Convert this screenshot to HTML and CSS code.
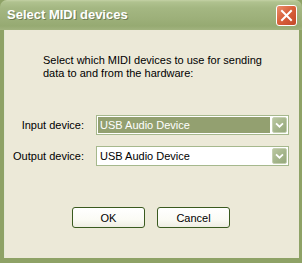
FILE: index.html
```html
<!DOCTYPE html>
<html>
<head>
<meta charset="utf-8">
<link rel="stylesheet" href="styles.css">
</head>
<body>
<div class="window">
  <div class="titlebar">
    <span class="title">Select MIDI devices</span>
    <div class="close">
      <svg width="19" height="19" viewBox="0 0 19 19">
        <path d="M5 5 L14 14 M14 5 L5 14" stroke="#fff" stroke-width="2" stroke-linecap="square" fill="none"/>
      </svg>
    </div>
  </div>
  <div class="client">
    <p class="intro">Select which MIDI devices to use for sending<br>data to and from the hardware:</p>
    <div class="row first">
      <span class="label">Input device:</span>
      <div class="combo focused">
        <span class="value">USB Audio Device</span>
        <span class="drop"><svg width="15" height="16" viewBox="0 0 15 16"><path d="M3.5 6 L7.5 10 L11.5 6" stroke="#fff" stroke-width="2" fill="none"/></svg></span>
      </div>
    </div>
    <div class="row">
      <span class="label">Output device:</span>
      <div class="combo">
        <span class="value">USB Audio Device</span>
        <span class="drop"><svg width="15" height="16" viewBox="0 0 15 16"><path d="M3.5 6 L7.5 10 L11.5 6" stroke="#fff" stroke-width="2" fill="none"/></svg></span>
      </div>
    </div>
    <div class="buttons">
      <div class="btn">OK</div>
      <div class="btn">Cancel</div>
    </div>
  </div>
</div>
</body>
</html>
```
FILE: styles.css
```css
html, body {
  margin: 0;
  padding: 0;
  background: #ece9d8;
}
.window {
  width: 302px;
  height: 263px;
  box-sizing: border-box;
  display: flex;
  flex-direction: column;
  background: #8ea266;
  font-family: "Liberation Sans", Arial, sans-serif;
  font-size: 11px;
  color: #000;
}
.titlebar {
  height: 30px;
  flex: none;
  display: flex;
  align-items: center;
  justify-content: space-between;
  padding: 0 5px 0 7px;
  box-sizing: border-box;
  background: linear-gradient(to bottom, #c4d1a5 0px, #b0c28f 2px, #a4b782 8px, #9db07a 18px, #96aa72 26px, #a2b37f 30px);
  border-radius: 7px 7px 0 0;
}
.title {
  font-family: "Liberation Sans", Arial, sans-serif;
  font-weight: bold;
  font-size: 13px;
  color: #fff;
  text-shadow: 1px 1px 0 #6e7d52;
  padding-bottom: 1px;
}
.close {
  width: 21px;
  height: 21px;
  box-sizing: border-box;
  border: 1px solid #fff;
  border-radius: 3px;
  background: linear-gradient(135deg, #eb8e6c 0%, #d9623c 45%, #c4482a 100%);
  display: flex;
  margin-top: 1px;
}
.client {
  flex: 1;
  margin: 0 3px 5px 4px;
  background: #ece9d8;
  border-left: 1px solid #e3e8d6;
  display: flex;
  flex-direction: column;
}
.intro {
  margin: 24px 0 0 38px;
  line-height: 13px;
}
.row {
  display: flex;
  align-items: center;
  margin-top: 11px;
}
.row.first {
  margin-top: 35px;
}
.label {
  width: 79px;
  text-align: right;
  margin-right: 12px;
}
.combo {
  width: 193px;
  height: 20px;
  box-sizing: border-box;
  border: 1px solid #a6b88d;
  background: #fff;
  display: flex;
  align-items: center;
  padding: 1px;
}
.value {
  flex: 1;
  height: 16px;
  line-height: 16px;
  padding-left: 2px;
}
.combo.focused .value {
  background: #93a070;
  color: #fff;
  margin-right: 2px;
}
.drop {
  width: 15px;
  height: 16px;
  box-sizing: border-box;
  border: 1px solid #c4cfb0;
  border-radius: 2px;
  background: linear-gradient(135deg, #b9c6a0 0%, #a2b388 60%, #96a87c 100%);
  display: flex;
  align-items: center;
  justify-content: center;
  overflow: hidden;
}
.buttons {
  display: flex;
  gap: 12px;
  margin: 41px 0 0 67px;
}
.btn {
  width: 73px;
  height: 21px;
  box-sizing: border-box;
  border: 1px solid #3a5a1f;
  border-radius: 3px;
  background: linear-gradient(to bottom, #ffffff 0%, #fbfbf5 60%, #eeede3 100%);
  display: flex;
  align-items: center;
  justify-content: center;
}
```
